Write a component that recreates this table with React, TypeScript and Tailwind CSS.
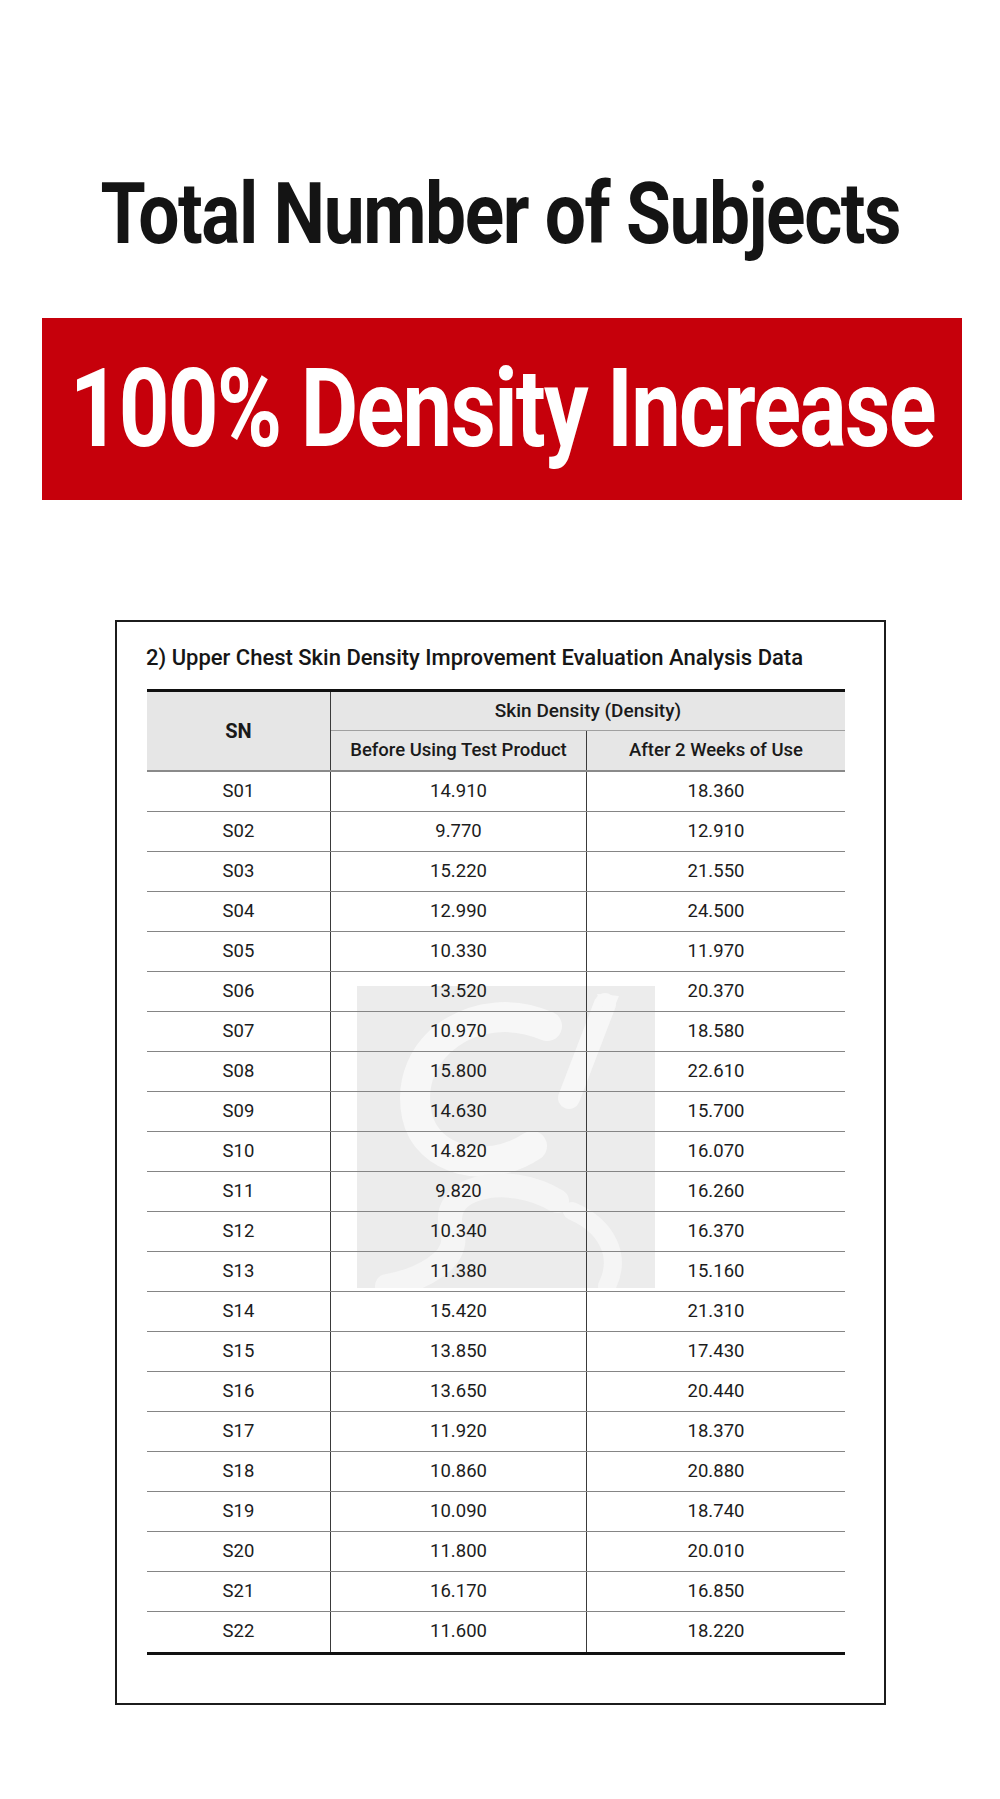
import React from "react";

const rows: [string, string, string][] = [
  ["S01", "14.910", "18.360"],
  ["S02", "9.770", "12.910"],
  ["S03", "15.220", "21.550"],
  ["S04", "12.990", "24.500"],
  ["S05", "10.330", "11.970"],
  ["S06", "13.520", "20.370"],
  ["S07", "10.970", "18.580"],
  ["S08", "15.800", "22.610"],
  ["S09", "14.630", "15.700"],
  ["S10", "14.820", "16.070"],
  ["S11", "9.820", "16.260"],
  ["S12", "10.340", "16.370"],
  ["S13", "11.380", "15.160"],
  ["S14", "15.420", "21.310"],
  ["S15", "13.850", "17.430"],
  ["S16", "13.650", "20.440"],
  ["S17", "11.920", "18.370"],
  ["S18", "10.860", "20.880"],
  ["S19", "10.090", "18.740"],
  ["S20", "11.800", "20.010"],
  ["S21", "16.170", "16.850"],
  ["S22", "11.600", "18.220"],
];

function Watermark() {
  return (
    <div className="absolute left-[210px] top-[294px] w-[298px] h-[302px] bg-[#ececec]">
      <svg width="298" height="302" viewBox="0 0 298 302" fill="none">
        <path
          d="M190 40 C 120 10, 45 60, 60 130 C 70 175, 130 190, 175 160"
          stroke="#f7f7f7"
          strokeWidth="30"
          strokeLinecap="round"
        />
        <path d="M248 18 L 212 112" stroke="#f7f7f7" strokeWidth="22" strokeLinecap="round" />
        <path d="M240 8 L 262 10 L 252 34 Z" fill="#f7f7f7" />
        <path
          d="M200 215 C 150 185, 80 200, 95 245 C 105 275, 60 295, 30 300"
          stroke="#f5f5f5"
          strokeWidth="24"
          strokeLinecap="round"
        />
        <path d="M215 225 C 250 240, 265 270, 250 300" stroke="#f5f5f5" strokeWidth="18" strokeLinecap="round" />
      </svg>
    </div>
  );
}

export default function App() {
  return (
    <div className="relative w-[1000px] h-[1799px] bg-white text-[#141414] font-['Roboto','Liberation_Sans',sans-serif] overflow-hidden">
      <div className="pt-[171px] h-[257px] flex justify-center text-[86px] leading-none font-bold">
        <span className="inline-block shrink-0 whitespace-nowrap tracking-[-0.02em] scale-x-[0.85]">
          Total Number of Subjects
        </span>
      </div>

      <div className="mt-[61px] ml-[42px] w-[920px] h-[182px] bg-[#c6000b] flex items-center justify-center">
        <span className="inline-block shrink-0 whitespace-nowrap text-white text-[110px] leading-none font-bold tracking-[-0.02em] scale-x-[0.805]">
          100% Density Increase
        </span>
      </div>

      <div className="mt-[120px] ml-[115px] w-[771px] h-[1085px] border-2 border-[#1c1c1c] pt-[25px] pl-[30px]">
        <div className="ml-[-1px] text-[22px] leading-none font-medium text-[#161616] whitespace-nowrap">
          2) Upper Chest Skin Density Improvement Evaluation Analysis Data
        </div>

        <div className="relative mt-[20px] w-[698px] border-t-[3px] border-b-[3px] border-[#111]">
          <div className="grid grid-cols-[184px_256px_258px] bg-[#e6e6e6] border-b-2 border-[#8a8a8a] font-medium text-[18.5px] text-[#1a1a1a]">
            <div className="row-span-2 flex items-center justify-center border-r border-[#3a3a3a] font-bold text-[20px]">
              SN
            </div>
            <div className="col-span-2 h-[39px] flex items-center justify-center border-b border-[#a0a0a0] text-[19px]">
              Skin Density (Density)
            </div>
            <div className="h-[39px] flex items-center justify-center border-r border-[#3a3a3a]">
              Before Using Test Product
            </div>
            <div className="h-[39px] flex items-center justify-center">After 2 Weeks of Use</div>
          </div>

          <Watermark />

          <div className="relative">
            {rows.map((r, i) => (
              <div
                key={r[0]}
                className={
                  "grid grid-cols-[184px_256px_258px] h-[40px] text-[18.5px] text-[#1c1c1c] " +
                  (i < rows.length - 1 ? "border-b-[1.5px] border-[#858585]" : "")
                }
              >
                <div className="flex items-center justify-center border-r border-[#3a3a3a]">{r[0]}</div>
                <div className="flex items-center justify-center border-r border-[#3a3a3a]">{r[1]}</div>
                <div className="flex items-center justify-center">{r[2]}</div>
              </div>
            ))}
          </div>
        </div>
      </div>
    </div>
  );
}
